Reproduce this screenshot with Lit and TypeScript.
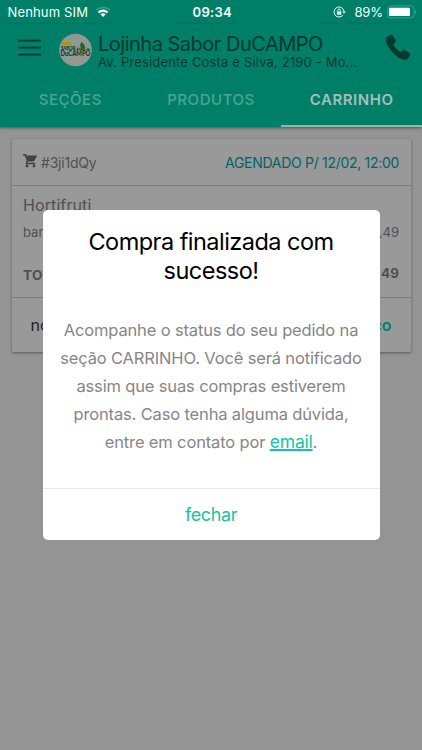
import { LitElement, html, css } from "lit";
import { customElement } from "lit/decorators.js";

@customElement("status-bar")
class StatusBar extends LitElement {
  static styles = css`
    :host { display: grid; grid-template-columns: 1fr auto 1fr; align-items: center; height: 24px; padding: 0 5px 0 7.5px; color: #f4fffc; font-size: 13px; line-height: 24px; white-space: nowrap; }
    .side { display: flex; align-items: center; }
    .end { justify-content: flex-end; }
    .carrier { letter-spacing: 0.15px; }
    .wifi { margin-left: 7px; }
    .time { font-weight: 600; letter-spacing: 0.3px; }
    .percent { margin: 0 4px 0 8px; letter-spacing: -0.1px; }
    svg { display: block; flex: none; }
  `;
  render() {
    return html`
      <div class="side">
        <span class="carrier">Nenhum SIM</span>
        <svg class="wifi" width="16" height="12" viewBox="0 0 16 12" fill="none">
          <path d="M1 4.2Q8-1.5 15 4.2" stroke="#28a087" stroke-width="1.7"/>
          <path d="M3.4 6.5Q8 2.8 12.6 6.5" stroke="#fff" stroke-width="2"/>
          <path d="M5.4 8.3Q8 6.1 10.6 8.3L8 11Z" fill="#fff"/>
        </svg>
      </div>
      <span class="time">09:34</span>
      <div class="side end">
        <svg width="13" height="12" viewBox="0 0 13 12" fill="none" stroke="#e8fff9">
          <path d="M11 5.2A5 5 0 1 0 9.8 9.3" stroke-width="1"/>
          <path d="M9.2 5.4h3.6L11 7.8Z" fill="#e8fff9" stroke="none"/>
          <rect x="3.9" y="5.4" width="4.4" height="3.3" fill="#e8fff9" stroke="none"/>
          <path d="M4.8 5.5V4.3a1.3 1.3 0 0 1 2.6 0v1.2" stroke-width=".9"/>
        </svg>
        <span class="percent">89%</span>
        <svg width="30" height="14" viewBox="0 0 30 14">
          <rect x=".6" y=".9" width="26.4" height="12" rx="3" fill="none" stroke="#2fa58d"/>
          <rect x="2" y="2.8" width="21" height="8.2" rx="1" fill="#fff"/>
          <path d="M28 5c1.7.6 1.7 3.4 0 4Z" fill="#2fa58d"/>
        </svg>
      </div>
    `;
  }
}

@customElement("shop-header")
class ShopHeader extends LitElement {
  static styles = css`
    :host { display: block; height: 103px; background: #007f68; color: #04392f; box-shadow: 0 1px 3px #00000070; }
    .bar { display: flex; align-items: center; height: 48px; padding: 0 11px 0 18px; }
    .logo { margin: 3px 6px 0 18px; }
    .names { flex: 1; min-width: 0; white-space: nowrap; }
    .name { font-size: 20px; line-height: 20px; letter-spacing: -0.5px; margin-top: 8px; }
    .address { font-size: 13px; line-height: 16px; letter-spacing: 0.17px; }
    .tabs { display: grid; grid-template-columns: repeat(3, 1fr); height: 55px; }
    .tab { display: flex; align-items: center; justify-content: center; box-sizing: border-box; padding-top: 2px; border-bottom: 2px solid transparent; font-size: 15px; font-weight: 500; letter-spacing: 0.55px; color: #4da591; }
    .active { color: #a8bdb7; font-weight: 600; border-color: #9fb3ad; }
    svg { display: block; flex: none; }
    .phone { margin-top: -1px; }
    .mark { font-family: "Lato", sans-serif; font-weight: 900; }
  `;
  render() {
    return html`
      <div class="bar">
        <svg width="23" height="18" viewBox="0 0 23 18">
          <path d="M.3 1.7h22.6M.3 8.7h22.6M.3 15.7h22.6" stroke="#04392f" stroke-width="1.8"/>
        </svg>
        <svg class="logo" width="33" height="34" viewBox="0 0 33 34">
          <circle cx="16.5" cy="17" r="16.3" fill="#929894"/>
          <rect x="2.4" y="9" width="10" height="3" fill="#a2971c"/>
          <path d="M17.5 17l1-2.6 2 .6 1.5-6 3 2 1 3.4 4 1 1.5 1.6Z" fill="#17653a"/>
          <path d="M18.8 15.6l1.8-3.4 1.8 3.4ZM25 16.6l2-2.6 2 2.6Z" fill="#a39a25"/>
          <text class="mark" x="2" y="17" font-size="5.4" textLength="14.5" lengthAdjust="spacingAndGlyphs" fill="#073f32">SABOR</text>
          <text class="mark" x="1.6" y="22.9" font-size="7" textLength="29.8" lengthAdjust="spacingAndGlyphs" fill="#073f32">DuCAMPO</text>
        </svg>
        <div class="names">
          <div class="name">Lojinha Sabor DuCAMPO</div>
          <div class="address">Av. Presidente Costa e Silva, 2190 - Mo...</div>
        </div>
        <svg class="phone" width="26" height="27" viewBox="0 0 26 27">
          <path d="M5 1.2Q7 .2 8.2 2.1L10.5 6.2Q11.2 7.7 9.9 8.8L8.1 10.2Q10.8 15.4 15.6 18.3L17.4 16.4Q18.5 15.2 20.1 16.1L24.1 18.7Q25.8 19.8 24.7 21.7L23.1 24.2Q21.7 26.3 18.8 25.8Q13.5 25 7.6 18.6Q1.5 11.8 1 6.4Q.8 3.6 2.8 2.3Z" fill="#04392f"/>
        </svg>
      </div>
      <div class="tabs">
        <div class="tab">SEÇÕES</div>
        <div class="tab">PRODUTOS</div>
        <div class="tab active">CARRINHO</div>
      </div>
    `;
  }
}

@customElement("order-card")
class OrderCard extends LitElement {
  static styles = css`
    :host { display: block; box-sizing: border-box; height: 213px; margin: 12px 11.5px 0 11.5px; background: #999; border-radius: 2px; box-shadow: 0 1px 3px #00000066; color: #505050; font-size: 14px; }
    .row { display: flex; align-items: center; justify-content: space-between; padding: 0 11.5px; box-sizing: border-box; white-space: nowrap; }
    .top { height: 47px; border-bottom: 1px solid #7d7d7d; padding-top: 1px; }
    .code { display: flex; align-items: center; gap: 4px; letter-spacing: -0.2px; }
    .slot { color: #006468; letter-spacing: -0.3px; }
    .heading { height: 39px; padding-bottom: 2px; font-size: 16px; letter-spacing: 0.1px; }
    .item { height: 14px; font-size: 13px; }
    .total { height: 59px; font-weight: 700; font-size: 13.5px; border-bottom: 1px solid #7d7d7d; padding-top: 12px; }
    .label { padding-top: 2px; letter-spacing: 0.3px; }
    .sum { padding-bottom: 2px; }
    .actions { height: 53px; padding: 0 19px; font-size: 16px; color: #222; }
    .confirm { color: #068069; font-weight: 600; }
    svg { display: block; margin-top: -4px; }
  `;
  render() {
    return html`
      <div class="row top">
        <span class="code">
          <svg width="14" height="15" viewBox="0 0 14 15" fill="#414141">
            <path d="M0 1h2.7l.8 1.5h9.8q.8 0 .5.8l-2.4 4.5q-.4.7-1.2.7H5l-.7 1.3h8v1.4H4q-2 0-1.2-1.8l1-1.7L1.6 2.4H0Z"/>
            <circle cx="4" cy="13" r="1.4"/><circle cx="11" cy="13" r="1.4"/>
          </svg>
          #3ji1dQy
        </span>
        <span class="slot">AGENDADO P/ 12/02, 12:00</span>
      </div>
      <div class="row heading">Hortifruti</div>
      <div class="row item"><span>banana</span><span>R$ 5,49</span></div>
      <div class="row total"><span class="label">TOTAL</span><span class="sum">R$ 5,49</span></div>
      <div class="row actions"><span>novo pedido</span><span class="confirm">endereço</span></div>
    `;
  }
}

@customElement("success-dialog")
class SuccessDialog extends LitElement {
  static styles = css`
    :host { display: flex; flex-direction: column; box-sizing: border-box; width: 337px; height: 330px; background: #fff; border-radius: 5px; text-align: center; white-space: nowrap; }
    .title { margin: 17px 0 0; font-size: 23.5px; line-height: 29px; font-weight: 400; letter-spacing: -0.53px; color: #000; }
    .body { margin: 31px 0 0; font-size: 16.5px; line-height: 28px; letter-spacing: -0.15px; color: #868686; }
    .link { color: #13c5a2; text-decoration: underline; text-decoration-thickness: 1.5px; font-size: 17.5px; line-height: 20px; letter-spacing: -0.2px; }
    .close { margin-top: auto; height: 51px; border-top: 1px solid #e8e8e8; line-height: 51px; font-size: 18px; letter-spacing: -0.4px; color: #13c5a2; }
  `;
  render() {
    return html`
      <h1 class="title">Compra finalizada com<br>sucesso!</h1>
      <p class="body">Acompanhe o status do seu pedido na<br>seção CARRINHO. Você será notificado<br>assim que suas compras estiverem<br>prontas. Caso tenha alguma dúvida,<br>entre em contato por <a class="link">email</a>.</p>
      <div class="close">fechar</div>
    `;
  }
}

@customElement("app-root")
class AppRoot extends LitElement {
  static styles = css`
    :host { display: block; position: relative; height: 750px; overflow: hidden; background: #949494; font-family: Inter, "Liberation Sans", sans-serif; }
    status-bar { background: #007f68; }
    .overlay { position: absolute; inset: 0; display: grid; place-items: center; }
  `;
  render() {
    return html`
      <status-bar></status-bar>
      <shop-header></shop-header>
      <order-card></order-card>
      <div class="overlay"><success-dialog></success-dialog></div>
    `;
  }
}
